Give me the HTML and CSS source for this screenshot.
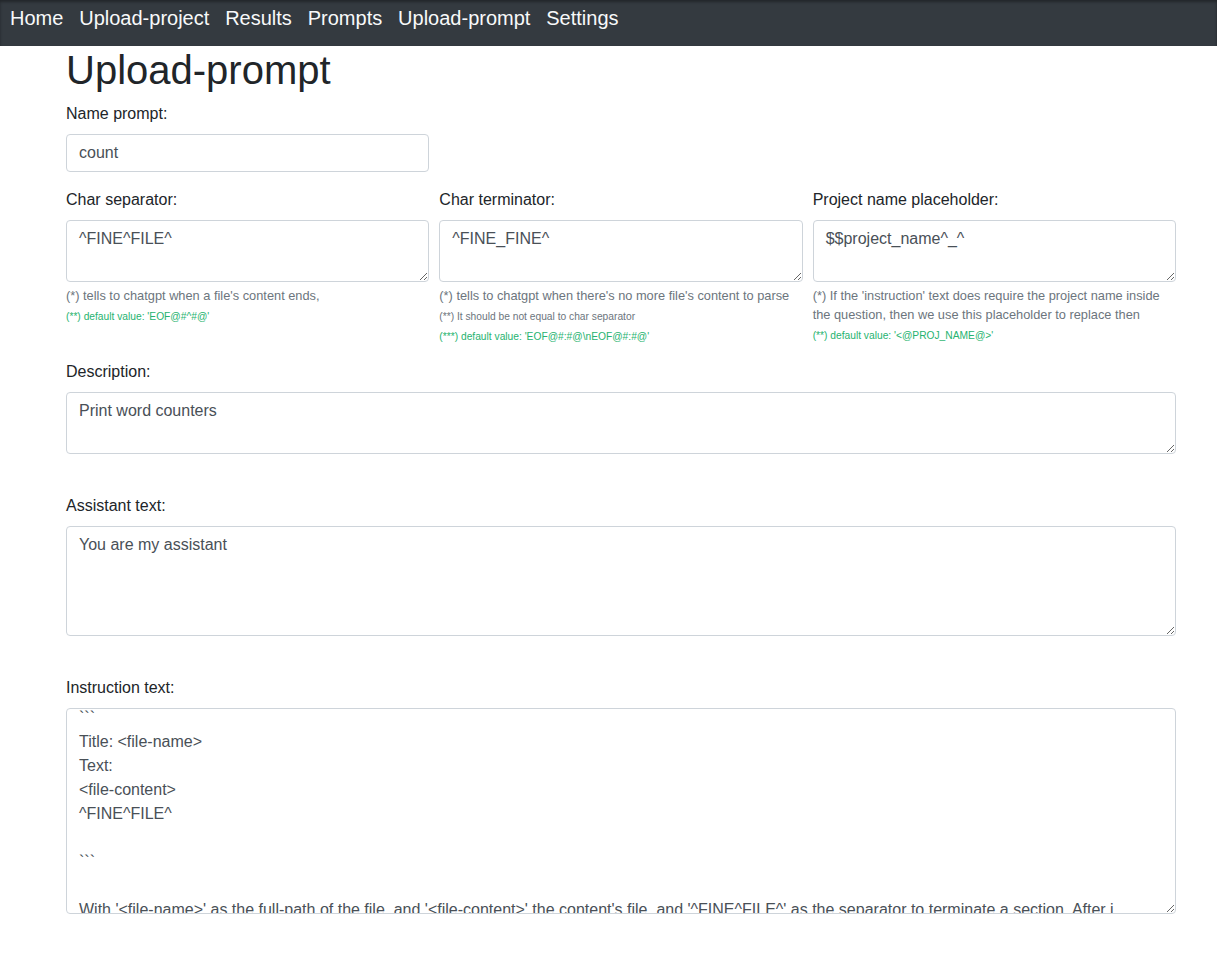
FILE: index.html
```html
<!DOCTYPE html>
<html lang="en">
<head>
<meta charset="utf-8">
<title>Upload-prompt</title>
<link rel="stylesheet" href="styles.css">
</head>
<body>
<nav class="navbar">
  <a class="nav-link" href="#">Home</a>
  <a class="nav-link" href="#">Upload-project</a>
  <a class="nav-link" href="#">Results</a>
  <a class="nav-link" href="#">Prompts</a>
  <a class="nav-link" href="#">Upload-prompt</a>
  <a class="nav-link" href="#">Settings</a>
</nav>
<main class="container">
  <h1 class="title">Upload-prompt</h1>
  <form class="prompt-form">
    <div class="row">
      <div class="form-group">
        <label class="label" for="name">Name prompt:</label>
        <input class="form-control" id="name" type="text" value="count">
      </div>
    </div>
    <div class="row">
      <div class="form-group">
        <label class="label" for="sep">Char separator:</label>
        <textarea class="form-control" id="sep" rows="2">^FINE^FILE^</textarea>
        <small class="form-text muted">(*) tells to chatgpt when a file's content ends,</small>
        <small class="form-text tiny success">(**) default value: 'EOF@#^#@'</small>
      </div>
      <div class="form-group">
        <label class="label" for="term">Char terminator:</label>
        <textarea class="form-control" id="term" rows="2">^FINE_FINE^</textarea>
        <small class="form-text muted">(*) tells to chatgpt when there's no more file's content to parse</small>
        <small class="form-text tiny muted">(**) It should be not equal to char separator</small>
        <small class="form-text tiny success">(***) default value: 'EOF@#:#@\nEOF@#:#@'</small>
      </div>
      <div class="form-group">
        <label class="label" for="ph">Project name placeholder:</label>
        <textarea class="form-control" id="ph" rows="2">$$project_name^_^</textarea>
        <small class="form-text muted">(*) If the 'instruction' text does require the project name inside the question, then we use this placeholder to replace then</small>
        <small class="form-text tiny success">(**) default value: '&lt;@PROJ_NAME@&gt;'</small>
      </div>
    </div>
    <div class="form-group">
      <label class="label" for="desc">Description:</label>
      <textarea class="form-control" id="desc" rows="2">Print word counters</textarea>
    </div>
    <div class="spacer"></div>
    <div class="form-group">
      <label class="label" for="assist">Assistant text:</label>
      <textarea class="form-control" id="assist" rows="4">You are my assistant</textarea>
    </div>
    <div class="spacer"></div>
    <div class="form-group">
      <label class="label" for="instr">Instruction text:</label>
      <textarea class="form-control scrolled" id="instr" rows="8">I will send you some files in this format:
&#96;&#96;&#96;
Title: &lt;file-name&gt;
Text:
&lt;file-content&gt;
^FINE^FILE^

&#96;&#96;&#96;

With '&lt;file-name&gt;' as the full-path of the file, and '&lt;file-content&gt;' the content's file, and '^FINE^FILE^' as the separator to terminate a section. After i sent_you_all_the_files, count the words of every file and print the counters.</textarea>
    </div>
  </form>
</main>
<script src="script.js"></script>
</body>
</html>
```

FILE: styles.css
```css
* { box-sizing: border-box; }

body {
  margin: 0;
  font-family: "Liberation Sans", Arial, sans-serif;
  font-size: 16px;
  line-height: 1.5;
  color: #212529;
  background: #fff;
}

.navbar {
  height: 46px;
  background: #343a40;
  display: flex;
  align-items: flex-start;
  padding: 3px 0 0 2.05px;
  box-shadow: inset 0 2px 3px rgba(0, 0, 0, 0.35);
}

.nav-link {
  font-size: 20px;
  line-height: 30px;
  color: #f8f9fa;
  text-decoration: none;
  padding: 0 7.95px;
}

.container {
  width: 1110px;
  margin-left: 66px;
}

.title {
  font-size: 40px;
  font-weight: 500;
  line-height: 1.2;
  margin: 0 0 8px;
}

.row {
  display: grid;
  grid-template-columns: repeat(3, 1fr);
  column-gap: 10px;
}

.form-group {
  margin-bottom: 16px;
}

.label {
  display: inline-block;
  margin-bottom: 8px;
}

.form-control {
  display: block;
  width: 100%;
  font-family: inherit;
  font-size: 16px;
  line-height: 1.5;
  color: #495057;
  background: #fff;
  border: 1px solid #ced4da;
  border-radius: 4px;
  padding: 6px 12px;
  margin: 0;
}

input.form-control {
  height: 38px;
}

textarea.form-control {
  overflow: hidden;
  resize: vertical;
}

.form-text {
  display: block;
  margin-top: 4px;
  font-size: 12.8px;
  line-height: 1.5;
}

.form-text.tiny {
  font-size: 10.24px;
}

.muted { color: #6c757d; }
.success { color: #26b36f; }

.spacer { height: 24px; }
```

FILE: script.js
```js
document.getElementById('instr').scrollTop = 33;
```
